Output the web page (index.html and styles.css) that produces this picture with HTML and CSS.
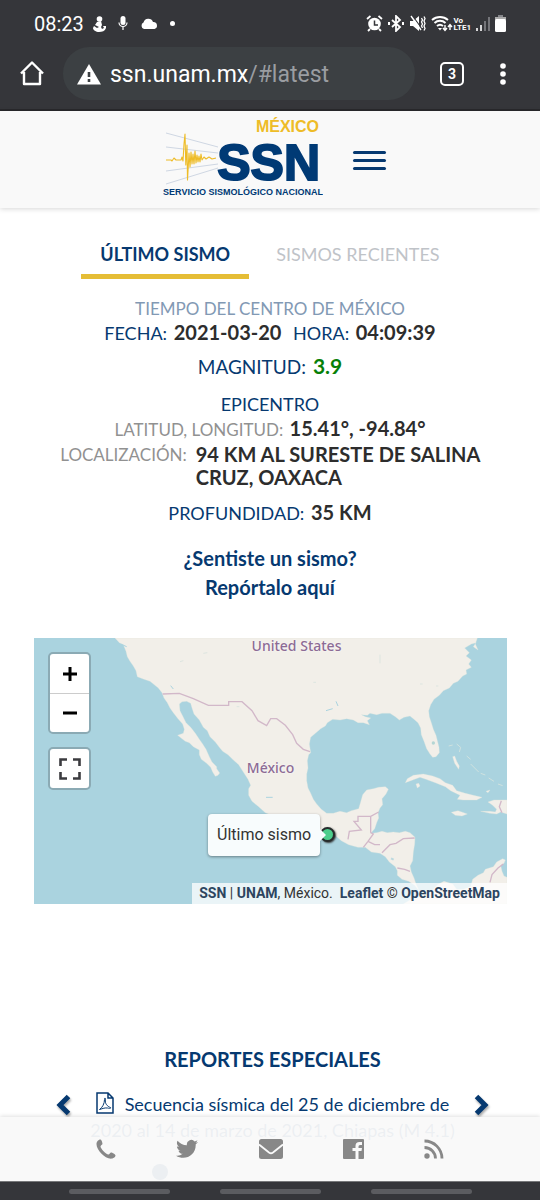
FILE: index.html
```html
<!DOCTYPE html>
<html lang="es">
<head>
<meta charset="utf-8">
<meta name="viewport" content="width=device-width, initial-scale=1">
<title>Servicio Sismológico Nacional</title>
<link rel="stylesheet" href="styles.css">
</head>
<body>
<div class="chrome">
  <div class="status">
    <div class="status-left">
      <span class="clock">08:23</span>
      <svg width="14" height="16" viewBox="0 0 14 16" fill="#fff"><circle cx="7.500" cy="3" r="2.800"/><path d="M5 6l4-1 1 4-1 2 1 2 2-1-1-2 3 0 0 2c-1 3-4 4-7 4-3 0-6-2-6-4l1-2 3 2 2-1-4-2z"/></svg>
      <svg width="10" height="15" viewBox="0 0 10 15"><rect x="2.500" y="0" width="5" height="9" rx="2.500" fill="#fff"/><path d="M1 6.500a4 4 0 0 0 8 0M5 10.500V14" fill="none" stroke="#fff" stroke-width="1.200"/></svg>
      <svg width="18" height="12" viewBox="0 0 18 12" fill="#fff"><path d="M4 11a3.500 3.500 0 0 1-.5-6.500A5 5 0 0 1 13 4a3.600 3.600 0 0 1 1.500 7z"/></svg>
      <span class="dot"></span>
    </div>
    <div class="status-right">
      <svg width="17" height="17" viewBox="0 0 17 17"><circle cx="8.500" cy="9" r="6.300" fill="#fff"/><path d="M1 4l3.500-3M16 4l-3.500-3M4 14l-2 2M13 14l2 2" stroke="#fff" stroke-width="1.800"/><path d="M8.500 5.500V10h3.500" fill="none" stroke="#35363a" stroke-width="1.500"/></svg>
      <svg width="16" height="17" viewBox="0 0 16 17"><path d="M4 5l8 7-4 4V1l4 4-8 7" fill="none" stroke="#fff" stroke-width="1.800"/><path d="M1 7v3M15 7v3" stroke="#fff" stroke-width="2"/></svg>
      <svg width="17" height="17" viewBox="0 0 17 17"><path d="M1 6h3l6-5v15l-6-5H1z" fill="#fff"/><path d="M3 0l10 14" stroke="#35363a" stroke-width="1.200"/><path d="M2 1l10 14" stroke="#fff" stroke-width="1.400"/><path d="M12.500 3l1 2-1 2 1 2-1 2 1 2M15 1.500l1 2-1 2.500 1 2.500-1 2.500 1 2.500-1 2" fill="none" stroke="#fff" stroke-width="1.300"/></svg>
      <svg width="22" height="17" viewBox="0 0 22 17"><path d="M1 5a12 12 0 0 1 16 0M3.500 8a8 8 0 0 1 11 0M6 11a4.500 4.500 0 0 1 6 0" fill="none" stroke="#fff" stroke-width="1.900"/><path d="M9 15.500l-2-2.500h4z" fill="#fff"/><path d="M14 10v5M12 13l2 2.500 2-2.500M19 15v-5M17 12l2-2.500 2 2.500" fill="none" stroke="#fff" stroke-width="1.400"/></svg>
      <span class="lte">Vo<br>LTE1</span>
      <svg width="14" height="16" viewBox="0 0 14 16"><path d="M1 12v3M5 9v6" stroke="#fff" stroke-width="1.600"/><path d="M9 5v10M13 1v14" stroke="#85868a" stroke-width="1.600"/></svg>
      <svg width="11" height="17" viewBox="0 0 11 17"><path d="M3 0h5v3H3z" fill="#85868a"/><path d="M0 2h11v3H0z" fill="#aaa"/><rect y="4" width="11" height="13" rx="1.500" fill="#fff"/></svg>
    </div>
  </div>
  <div class="toolbar">
    <button class="tool" aria-label="Inicio"><svg width="24" height="25" viewBox="0 0 24 25"><path d="M1 12.500L12 1.500l11 11M4 11v12h16V11" fill="none" stroke="#fff" stroke-width="2.400" stroke-linejoin="round"/></svg></button>
    <div class="address">
      <svg width="24" height="21" viewBox="0 0 24 21"><path d="M12 0l12 20.500H0z" fill="#fff"/><path d="M12 8v5M12 15v3" stroke="#3c4043" stroke-width="2.600"/></svg>
      <a href="#latest">ssn.unam.mx<span>/#latest</span></a>
    </div>
    <button class="tool tab-count" aria-label="Pestañas">3</button>
    <button class="tool" aria-label="Menú"><svg width="6" height="22" viewBox="0 0 6 22" fill="#fff"><circle cx="3" cy="3" r="2.800"/><circle cx="3" cy="11" r="2.800"/><circle cx="3" cy="19" r="2.800"/></svg></button>
  </div>
</div>

<header class="site-header">
  <svg class="logo" width="160" height="80" viewBox="163 117 160 80" role="img" aria-label="SSN México">
    <path d="M166 133l52 14M166 147l52 6M166 171l52-7M166 184l52-16" stroke="#cfd7e3" fill="none"/>
    <path d="M166 160h5l1 1 2-3 2 2 5 0 1-3 1 4 1-17 1-10 .8 31 1.200-20 .5 35 1.500-27 1 14 1-15 1 12 1-10 1 10 1-13 1 12 1-8 1 7 1-6 1 6 1-8 1 6 2-3 2 2 3-2 3 2 4-1" fill="none" stroke="#eebc27" stroke-width="1.100" stroke-linejoin="round"/>
    <text class="logo-country" x="319" y="132">MÉXICO</text>
    <text class="logo-name" x="320" y="180">SSN</text>
    <text class="logo-full" x="243" y="195">SERVICIO SISMOLÓGICO NACIONAL</text>
  </svg>
  <button class="menu" aria-label="Abrir menú"><span></span><span></span><span></span></button>
</header>

<main>
  <nav class="tabs">
    <a class="tab active" href="#latest">ÚLTIMO SISMO</a>
    <a class="tab" href="#recent">SISMOS RECIENTES</a>
  </nav>

  <section class="quake">
    <p class="zone">TIEMPO DEL CENTRO DE MÉXICO</p>
    <p class="row">FECHA: <b>2021-03-20</b> <span class="second">HORA: <b>04:09:39</b></span></p>
    <p class="row magnitude">MAGNITUD: <b>3.9</b></p>
    <p class="row epicenter">EPICENTRO</p>
    <p class="row minor">LATITUD, LONGITUD: <b>15.41°, -94.84°</b></p>
    <div class="row minor place"><span>LOCALIZACIÓN:</span><b>94 KM AL SURESTE DE SALINA CRUZ, OAXACA</b></div>
    <p class="row depth">PROFUNDIDAD: <b>35 KM</b></p>
    <a class="report" href="#report">¿Sentiste un sismo?<br>Repórtalo aquí</a>
  </section>

  <section class="map">
    <svg class="map-art" viewBox="12 22 1419 798" role="img" aria-label="Mapa del último sismo">
      <path fill="#aad3df" d="M12 22h1419v798H12z"/>
      <g fill="#f2efe9" stroke="#e2e6df" stroke-width="1" stroke-linejoin="round">
        <path d="M255 22L268 36 280 42 288 62 292 78 300 92 310 106 318 120 322 138 342 146 360 152 385 172 396 186 402 202 412 216 420 232 430 246 444 264 458 280 463 296 460 308 443 314 456 324 466 332 478 336 490 348 508 358 508 372 514 386 530 398 542 410 548 424 556 437 564 434 569 427 560 414 560 408 546 394 538 378 528 356 518 340 508 326 496 308 482 290 468 276 458 256 450 240 448 220 456 213 470 212 482 218 486 232 492 250 508 268 520 290 532 300 540 318 556 334 568 350 578 362 594 372 610 388 626 402 640 424 654 446 662 464 656 474 656 494 666 512 686 528 706 546 740 560 790 592 830 606 870 612 915 614 934 630 956 642 984 650 1006 650 1024 664 1050 668 1066 678 1078 694 1096 708 1102 720 1102 734 1116 746 1136 752 1154 764 1170 784 1190 792 1210 776 1222 762 1242 752 1268 760 1280 776 1300 776 1322 768 1328 746 1344 734 1360 726 1366 716 1390 708 1400 694 1418 684 1426 688 1422 698 1412 704 1416 722 1422 736 1431 740 1431 820 1120 820 1160 796 1165 775 1158 760 1152 742 1144 724 1140 706 1148 690 1150 664 1154 640 1155 620 1140 606 1126 602 1108 606 1090 604 1072 606 1056 602 1040 606 1022 608 1034 594 1040 576 1046 562 1044 546 1050 532 1058 522 1056 504 1068 490 1075 476 1066 468 1046 470 1030 474 1010 478 998 492 992 514 986 534 964 540 950 546 930 542 910 548 890 548 874 536 860 520 850 506 842 488 834 472 830 450 830 430 834 412 832 390 836 372 842 366 838 340 842 320 858 306 872 294 886 286 892 276 908 266 930 268 950 264 970 268 984 276 1000 276 1018 282 1012 270 1022 262 1006 258 994 252 1012 254 1020 248 1040 252 1056 248 1080 248 1096 258 1108 268 1122 260 1140 256 1150 264 1164 276 1172 292 1174 312 1182 332 1190 354 1200 370 1208 380 1218 378 1228 366 1227 350 1222 330 1218 314 1210 296 1204 276 1198 258 1196 240 1202 222 1212 206 1228 194 1240 180 1258 172 1270 158 1284 152 1298 136 1310 130 1308 118 1324 110 1316 100 1324 88 1308 76 1318 66 1304 52 1324 40 1338 36 1330 48 1344 58 1336 40 1342 22Z"/>
        <path d="M1126 456L1132 444 1150 434 1180 430 1208 436 1230 444 1246 456 1268 464 1280 480 1306 488 1330 494 1356 500 1340 508 1300 508 1282 506 1290 494 1262 480 1246 468 1216 456 1188 446 1170 440 1148 448ZM1158 460l8-2 4 8-8 6zM1264 545L1284 540 1312 550 1296 556 1276 554ZM1352 542L1380 542 1396 544 1400 536 1388 524 1374 514 1392 508 1431 508V550L1412 544 1400 550 1380 548ZM1268 378l6-2 6 16 8 14-2 10-12-18zM1368 482l12-4-6 8z"/>
        <path d="M1256 346l12-3M1280 340l12 10-4 14M1310 376l12 10M1322 400l24 24M1352 428l14 5M1376 442l16 10M1404 460l14 5" stroke="#cfe2df" stroke-width="3" fill="none"/>
      </g>
      <path fill="none" stroke="#d2b8c9" stroke-width="4" d="M398 190L448 188 490 204 535 224H596V213H636L666 240 684 270 710 285 722 264H740L766 284 788 312 800 338 820 356 840 363M1046 544L1022 557V606M1022 557H984V572H972L994 598 958 602 954 626M1022 606L1030 610 1014 632 1000 650M1014 632L1034 642 1050 642M1056 666L1080 642 1098 638 1120 624 1154 622M1102 712L1124 716 1140 722M1380 755L1386 732 1404 712 1420 700M1414 510L1408 528 1416 546"/>
      <path stroke="#aad3df" stroke-width="3" fill="none" d="M422 165l8 10M272 40l18 8M888 240l20-6M918 212l6 14M708 500h20"/>
      <path stroke="#dde5e0" stroke-width="3" fill="none" d="M450 93l10-3M520 68l12-2M1050 72v26M850 155h8M1170 160h8M1218 166h7M620 228h8"/>
      <circle cx="1210" cy="337" r="5" fill="#b4d6d4"/>
      <path d="M1083 683l8 4" stroke="#bcd9df" stroke-width="6"/>
    </svg>
    <span class="country us">United States</span>
    <span class="country mx">México</span>
    <div class="controls">
      <div class="control">
        <button aria-label="Acercar"><svg width="16" height="16" viewBox="0 0 16 16"><path d="M1 8h14M8 1v14" stroke="#000" stroke-width="3"/></svg></button>
        <button aria-label="Alejar"><svg width="16" height="16" viewBox="0 0 16 16"><path d="M1 8h14" stroke="#000" stroke-width="3"/></svg></button>
      </div>
      <div class="control">
        <button aria-label="Pantalla completa"><svg width="22" height="22" viewBox="0 0 22 22"><path d="M1.500 8V1.500H8M14 1.500h6.500V8M20.500 14v6.500H14M8 20.500H1.500V14" fill="none" stroke="#3b3b3f" stroke-width="2.600"/></svg></button>
      </div>
    </div>
    <span class="marker"></span>
    <div class="tooltip">Último sismo</div>
    <div class="credits"><a href="#ssn">SSN</a> | <a href="#unam">UNAM</a>, México. &nbsp;<a href="#leaflet">Leaflet</a> © <a href="#osm">OpenStreetMap</a></div>
  </section>

  <section class="reports">
    <h2>REPORTES ESPECIALES</h2>
    <div class="carousel">
      <button aria-label="Anterior"><svg width="16" height="22" viewBox="0 0 16 22"><path d="M12.500 2.500L4 11l8.500 8.500" fill="none" stroke="#063970" stroke-width="5"/></svg></button>
      <a class="slide" href="#secuencia"><svg width="18" height="22" viewBox="0 0 18 22" fill="none" stroke="#063970"><path d="M1 1h11l5 5v15H1zM12 1v5h5" stroke-width="1.500"/><path d="M3.500 17.500c3-2 5-6 5-10 0-2 1-2 1 0-1 4 2 7 5 8 1 1-1 1-3 .5-3-.5-6 1-8 1.500z"/></svg>Secuencia sísmica del 25 de diciembre de 2020 al 14 de marzo de 2021, Chiapas (M 4.1)</a>
      <button aria-label="Siguiente"><svg width="16" height="22" viewBox="0 0 16 22"><path d="M3.500 2.500L12 11l-8.500 8.500" fill="none" stroke="#063970" stroke-width="5"/></svg></button>
    </div>
    <span class="page-dot"></span>
  </section>
</main>

<footer class="bottom">
  <nav class="social">
    <a href="#tel" aria-label="Teléfono"><svg width="20" height="20" viewBox="0 0 20 20"><path d="M4.500.5c1 0 2 3.500 2 4.300 0 1-2 1.700-2 2.700 0 2 5.500 8 8 8 1 0 1.500-2 2.700-2 1 0 4.300 2 4.300 2.800 0 2-2.500 3.400-4.500 3.400C8.500 19.700.5 10.500.5 5.200.5 3 2 .5 4.500.5z"/></svg></a>
    <a href="#twitter" aria-label="Twitter"><svg width="22" height="20" viewBox="0 0 24 20"><path d="M24 2.400c-.9.400-1.800.7-2.800.8 1-.6 1.800-1.600 2.200-2.700-1 .6-2 1-3.100 1.200A4.900 4.900 0 0 0 11.900 6C7.700 5.800 4.100 3.800 1.700.9c-1.300 2.200-.7 5.100 1.500 6.600-.8 0-1.600-.2-2.200-.6 0 2.300 1.600 4.400 3.900 4.900-.7.200-1.500.2-2.200.1.600 2 2.400 3.400 4.600 3.400A9.900 9.900 0 0 1 0 17.300C10 23.500 22 16.500 21.500 4.900c1-.7 1.800-1.600 2.500-2.500z"/></svg></a>
    <a href="#mail" aria-label="Correo"><svg width="24" height="20" viewBox="0 0 24 20"><rect width="24" height="20" rx="2.500"/><path d="M0 5.500l10 8q2 1.500 4 0l10-8" fill="none" stroke="#f9f9f9" stroke-width="1.800"/></svg></a>
    <a href="#facebook" aria-label="Facebook"><svg width="21" height="20" viewBox="0 0 21 20"><rect width="21" height="20" rx="1"/><path d="M12.500 20v-8H9.500V9h3V7q0-4 4-4H19v3h-2q-1.500 0-1.500 1.500V9H19l-.5 3h-3v8z" fill="#f9f9f9"/></svg></a>
    <a href="#rss" aria-label="RSS"><svg width="20" height="20" viewBox="0 0 20 20"><circle cx="3" cy="17" r="2.700"/><path d="M.5 8.500A11 11 0 0 1 11.500 19.500M.5 2A17.500 17.500 0 0 1 18 19.500" fill="none" stroke="#888" stroke-width="2.800"/></svg></a>
  </nav>
  <div class="gestures"><span></span><span></span><span></span></div>
</footer>
</body>
</html>
```
FILE: styles.css
```css
* { box-sizing: border-box; }
body {
  margin: 0;
  min-height: 100vh;
  background: #fff;
  color: #063970;
  font: 18px/24px Lato, sans-serif;
  overflow-x: hidden;
}
p, h2 { margin: 0; }
a { color: inherit; text-decoration: none; }
button { border: 0; padding: 0; background: none; color: inherit; font: inherit; }
svg { display: block; flex: none; }

.chrome {
  background: #35363a;
  border-bottom: 2px solid #29292c;
  color: #fff;
  font-family: Roboto, sans-serif;
}
.status {
  display: flex;
  justify-content: space-between;
  align-items: center;
  height: 47px;
  padding: 0 34px;
}
.status-left { display: flex; align-items: center; gap: 12px; }
.status-right { display: flex; align-items: center; gap: 5px; }
.clock { font-size: 20px; margin-right: -4px; }
.dot { width: 5px; height: 5px; border-radius: 50%; background: #fff; }
.lte { font-size: 8px; line-height: 7px; font-weight: 700; margin-left: -4px; }
.toolbar { display: flex; align-items: center; padding: 0 34px 9px 20px; gap: 36px; }
.tool { display: flex; align-items: center; justify-content: center; }
.tool:first-child { margin-right: -17px; }
.address {
  flex: 1;
  display: flex;
  align-items: center;
  gap: 9px;
  height: 53px;
  padding: 2px 14px 0;
  border-radius: 27px;
  background: #3c4043;
  font-size: 23px;
  margin-right: -11px;
}
.address span { color: #9a9da1; }
.tab-count {
  width: 24px;
  height: 24px;
  border: 2px solid #fff;
  border-radius: 5px;
  font-size: 14px;
  font-weight: 700;
}

.site-header {
  display: flex;
  align-items: center;
  justify-content: center;
  gap: 30px;
  height: 97px;
  padding-left: 9px;
  background: #f9f9f9;
  box-shadow: 0 1px 5px rgba(0, 0, 0, .16);
}
.logo { margin-bottom: 5px; }
.logo text { font-family: "Liberation Sans", sans-serif; font-weight: 700; fill: #003a75; }
.logo .logo-country { font-size: 16px; fill: #eebc27; text-anchor: end; }
.logo .logo-name { font-size: 50px; text-anchor: end; stroke: #003a75; stroke-width: 2px; }
.logo .logo-full { font-size: 9px; text-anchor: middle; }
.menu { display: flex; flex-direction: column; gap: 5px; padding-top: 2px; }
.menu span { width: 33px; height: 3px; border-radius: 2px; background: #063970; }

.tabs { display: flex; justify-content: center; gap: 8px; padding-top: 34px; }
.tab { padding: 0 19px 8px; border-bottom: 5px solid transparent; color: #bfc3c8; }
.tab.active { color: #063970; border-color: #e5bd36; font-weight: 700; }

.quake { padding: 19px 20px 0; text-align: center; }
.quake b { color: #2d2d2d; font-size: 20px; margin-left: 2px; }
.zone { color: #8299b4; font-size: 17px; line-height: 22px; }
.second { margin-left: 7px; }
.magnitude { margin-top: 9px; font-size: 19px; }
.quake .magnitude b { color: #078007; font-size: 21px; }
.epicenter { margin-top: 13px; }
.minor { color: #919191; font-size: 17px; }
.place { display: flex; justify-content: center; gap: 7px; line-height: 23px; margin-top: 1px; }
.place b { max-width: 284px; text-align: left; }
.depth { margin-top: 11px; }
.report { display: inline-block; margin-top: 19px; font-size: 20px; font-weight: 700; line-height: 29px; }

.map {
  position: relative;
  margin: 36px 33px 0 34px;
  color: #333;
  font-family: Roboto, sans-serif;
}
.map-art { width: 100%; height: auto; }
.country { position: absolute; color: #8c6b95; font: 500 14px/16px "Noto Sans", sans-serif; text-shadow: 0 0 2px #fff; }
.us { left: 46%; top: 0; }
.mx { left: 45%; top: 46%; }
.controls { position: absolute; left: 14px; top: 14px; display: grid; gap: 13px; }
.control {
  width: 43px;
  border: 2px solid #8baab4;
  border-radius: 5px;
  background: #fff;
}
.control button { display: flex; align-items: center; justify-content: center; width: 100%; height: 39px; }
.control button + button { border-top: 1px solid #ccc; }
.marker {
  position: absolute;
  left: 60.5%;
  top: 71%;
  width: 15px;
  height: 15px;
  border: 2px solid #262c2c;
  border-radius: 50%;
  background: #4dce8c;
  box-shadow: 1px 1px 2px #333;
}
.tooltip {
  position: absolute;
  right: 39.5%;
  top: 66%;
  padding: 9px;
  border-radius: 4px;
  background: #f8fcfd;
  font-size: 16px;
  box-shadow: 0 1px 3px rgba(0, 0, 0, .4);
}
.tooltip::after {
  content: "";
  position: absolute;
  left: 100%;
  top: 15px;
  border: 6px solid transparent;
  border-left-color: #f8fcfd;
}
.credits {
  position: absolute;
  right: 0;
  bottom: 0;
  padding: 0 7px;
  background: rgba(255, 255, 255, .75);
  font-size: 14px;
  line-height: 21px;
}
.credits a { color: #2d4560; font-weight: 700; }

.reports { padding: 142px 51px 0 56px; text-align: center; }
.reports h2 { font-size: 20px; line-height: 26px; }
.carousel { display: flex; justify-content: space-between; align-items: flex-start; margin-top: 19px; }
.carousel button { padding-top: 3px; filter: drop-shadow(1px 2px 1px #aaa); }
.slide { max-width: 370px; line-height: 26px; }
.slide svg { display: inline-block; vertical-align: -3px; margin-right: 11px; }
.page-dot { display: block; width: 16px; height: 16px; margin: 21px 0 0 96px; border-radius: 50%; background: #063970; }

.bottom { position: fixed; left: 0; right: 0; bottom: 0; }
.social {
  display: flex;
  justify-content: space-between;
  align-items: center;
  height: 64px;
  padding: 0 96px;
  background: rgba(249, 249, 249, .95);
  box-shadow: 0 -1px 4px rgba(0, 0, 0, .12);
  fill: #888;
}
.gestures {
  display: flex;
  justify-content: center;
  align-items: center;
  gap: 50px;
  height: 19px;
  border-top: 1px solid #77787a;
  background: #35363a;
}
.gestures span { width: 101px; height: 5px; border-radius: 3px; background: #5b5c60; }
```
